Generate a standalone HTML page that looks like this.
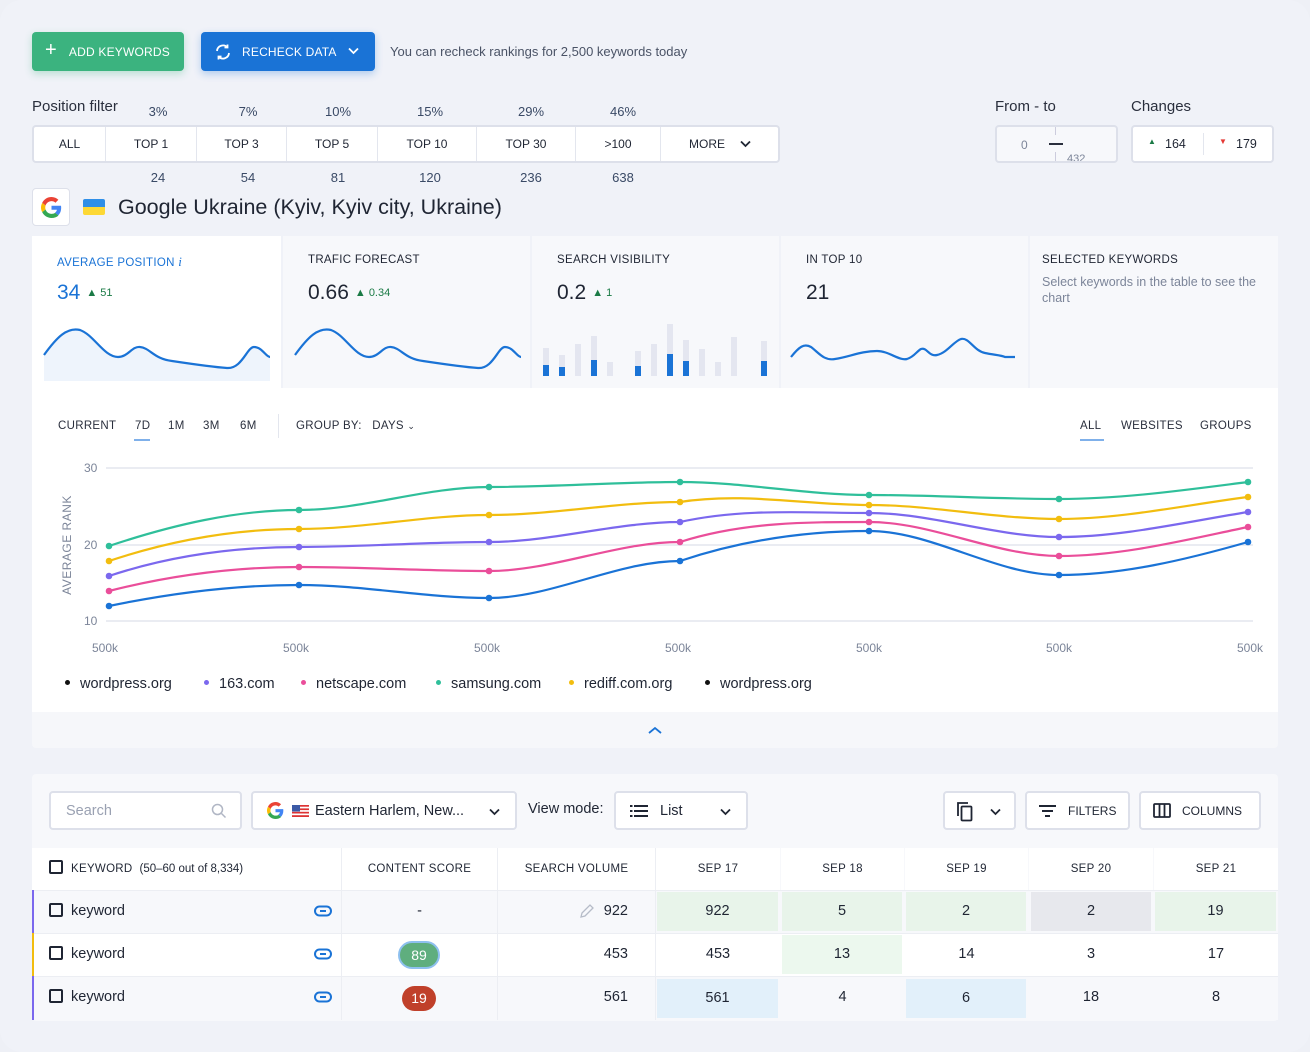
<!DOCTYPE html>
<html><head><meta charset="utf-8"><style>
*{box-sizing:border-box;margin:0;padding:0}
body{width:1310px;height:1052px;background:#eef0f6;font-family:"Liberation Sans",sans-serif;color:#1f2533;position:relative;overflow:hidden}
.a{position:absolute}
.btn{position:absolute;border-radius:4px;color:#fff;font-size:12px;display:flex;align-items:center;letter-spacing:.2px}
.lbl{font-size:15px;color:#2a2f3d}
.pf{position:absolute;top:125px;left:32px;width:748px;height:38px;background:#fff;border:2px solid #dde0ea;border-radius:4px}
.pf div{position:absolute;top:0;height:34px;line-height:34px;font-size:12px;text-align:center;border-right:1px solid #e3e6ee}
.num{position:absolute;font-size:13px;color:#3a4a66;width:60px;text-align:center}
.card{position:absolute;top:236px;height:152px;background:#f7f8fb}
.ct{position:absolute;left:25px;top:18px;font-size:11.5px;letter-spacing:.3px;color:#1f2533}
.cv{position:absolute;left:25px;top:45px;font-size:21px}
.up{font-size:11px;color:#1a7a45;margin-left:6px;vertical-align:3px}
.tb{position:absolute;top:420px;font-size:11.5px;letter-spacing:.3px;color:#2a2f3d}
.ax{position:absolute;font-size:12px;color:#7c8599}
.lg{position:absolute;top:676px;font-size:14.5px;color:#1f2533}
.lg i{display:inline-block;width:5px;height:5px;border-radius:50%;margin-right:10px;vertical-align:3px}
.box{position:absolute;background:#fff;border:2px solid #dde0ea;border-radius:4px;display:flex;align-items:center;font-size:14.5px}
.th{position:absolute;top:848px;height:42px;line-height:42px;font-size:11.5px;letter-spacing:.3px;text-align:center;background:#fff}
.cell{position:absolute;height:43px;line-height:43px;font-size:14.5px;text-align:center}
.cb{display:inline-block;width:14px;height:14px;border:2px solid #1f2533;border-radius:2px;vertical-align:-2px;margin-right:8px}
</style></head><body>
<div class="a" style="left:0;top:0;width:1310px;height:1052px;border-radius:22px;background:#f0f2f8"></div>

<div class="btn" style="left:32px;top:32px;width:152px;height:39px;background:#3bb37f;box-shadow:0 3px 8px rgba(59,179,127,.3)"><span style="font-size:20px;margin:0 12px 2px 13px;font-weight:300">+</span>ADD KEYWORDS</div>
<div class="btn" style="left:201px;top:32px;width:174px;height:39px;background:#1a73d6;box-shadow:0 3px 8px rgba(26,115,214,.3)">
<svg class="a" style="left:13px;top:11px" width="18" height="18" viewBox="0 0 18 18" fill="none" stroke="#fff" stroke-width="1.8"><path d="M3 8a6 6 0 0 1 10.5-3.5M15 10a6 6 0 0 1-10.5 3.5"/><path d="M13.5 1.5v3h-3M4.5 16.5v-3h3"/></svg>
<span style="margin-left:41px">RECHECK DATA</span>
<svg class="a" style="left:147px;top:15px" width="11" height="8" viewBox="0 0 11 8"><path d="M1 1.5l4.5 4.5 4.5-4.5" stroke="#fff" stroke-width="1.8" fill="none"/></svg></div>
<div class="a" style="left:390px;top:44px;font-size:13px;color:#4a5366">You can recheck rankings for 2,500 keywords today</div>

<div class="a lbl" style="left:32px;top:98px">Position filter</div>
<div class="num" style="left:128px;top:104px">3%</div><div class="num" style="left:218px;top:104px">7%</div><div class="num" style="left:308px;top:104px">10%</div><div class="num" style="left:400px;top:104px">15%</div><div class="num" style="left:501px;top:104px">29%</div><div class="num" style="left:593px;top:104px">46%</div>
<div class="pf">
<div style="left:0;width:72px;border-right:1px solid #e3e6ee">ALL</div>
<div style="left:72px;width:91px">TOP 1</div>
<div style="left:163px;width:90px">TOP 3</div>
<div style="left:253px;width:91px">TOP 5</div>
<div style="left:344px;width:99px">TOP 10</div>
<div style="left:443px;width:99px">TOP 30</div>
<div style="left:542px;width:85px">&gt;100</div>
<div style="left:627px;width:117px;border:none;text-align:left;padding-left:28px">MORE <svg style="margin-left:12px" width="11" height="8" viewBox="0 0 11 8"><path d="M1 1.5l4.5 4.5 4.5-4.5" stroke="#1f2533" stroke-width="1.8" fill="none"/></svg></div>
</div>
<div class="num" style="left:128px;top:170px">24</div><div class="num" style="left:218px;top:170px">54</div><div class="num" style="left:308px;top:170px">81</div><div class="num" style="left:400px;top:170px">120</div><div class="num" style="left:501px;top:170px">236</div><div class="num" style="left:593px;top:170px">638</div>

<div class="a lbl" style="left:995px;top:98px">From - to</div>
<div class="a" style="left:995px;top:125px;width:123px;height:38px;border:2px solid #dde0ea;border-radius:4px;background:#f7f8fb;overflow:hidden">
<div class="a" style="left:24px;top:11px;font-size:12px;color:#7c8599">0</div>
<div class="a" style="left:52px;top:16px;width:14px;height:2px;background:#2a2f3d"></div>
<div class="a" style="left:58px;top:0;width:1px;height:8px;background:#ccd"></div><div class="a" style="left:58px;top:25px;width:1px;height:10px;background:#ccd"></div>
<div class="a" style="left:70px;top:26px;font-size:11px;color:#7c8599">432</div></div>
<div class="a lbl" style="left:1131px;top:98px">Changes</div>
<div class="a" style="left:1131px;top:125px;width:143px;height:38px;border:2px solid #dde0ea;border-radius:4px;background:#fff;font-size:12.5px">
<span class="a" style="left:15px;top:10px;color:#1a7a45;font-size:8px">▲</span><span class="a" style="left:32px;top:10px">164</span>
<div class="a" style="left:70px;top:6px;width:1px;height:22px;background:#e3e6ee"></div>
<span class="a" style="left:86px;top:10px;color:#e53935;font-size:8px">▼</span><span class="a" style="left:103px;top:10px">179</span></div>

<div class="a" style="left:32px;top:188px;width:38px;height:38px;background:#fff;border:1px solid #dde0ea;border-radius:4px">
<svg class="a" style="left:8px;top:8px" width="21" height="21" viewBox="0 0 48 48"><path fill="#EA4335" d="M24 9.5c3.5 0 6.6 1.2 9 3.5l6.7-6.7C35.7 2.5 30.2 0 24 0 14.6 0 6.6 5.4 2.7 13.3l7.8 6C12.4 13.7 17.7 9.5 24 9.5z"/><path fill="#4285F4" d="M46.1 24.5c0-1.6-.1-3.1-.4-4.5H24v9h12.4c-.5 2.9-2.2 5.4-4.7 7l7.6 5.9c4.4-4.1 6.8-10.1 6.8-17.4z"/><path fill="#FBBC05" d="M10.5 28.7c-.5-1.4-.8-3-.8-4.7s.3-3.2.8-4.7l-7.8-6C1 16.6 0 20.2 0 24s1 7.4 2.7 10.7l7.8-6z"/><path fill="#34A853" d="M24 48c6.5 0 11.9-2.1 15.9-5.8l-7.6-5.9c-2.1 1.4-4.9 2.3-8.3 2.3-6.3 0-11.6-4.2-13.5-9.9l-7.8 6C6.6 42.6 14.6 48 24 48z"/></svg></div>
<div class="a" style="left:83px;top:199px;width:22px;height:16px;border-radius:2px;overflow:hidden"><div style="height:8px;background:#2f8fe8"></div><div style="height:8px;background:#fdd835"></div></div>
<div class="a" style="left:118px;top:195px;font-size:21.5px;color:#1f2533">Google Ukraine (Kyiv, Kyiv city, Ukraine)</div>

<!-- cards -->
<div class="card" style="left:32px;width:249px;background:#fff"><div class="ct" style="color:#1a73d6">AVERAGE POSITION <i style="font-family:'Liberation Serif';font-size:13px">i</i></div><div class="cv" style="color:#1a73d6">34<span class="up">▲ 51</span></div>
<svg class="a" style="left:10px;top:85px" width="235" height="60"><path d="M2 34 C15 16 25 6 38 9 C52 14 62 36 76 36 C86 36 90 25 98 26 C108 27 112 38 130 40 C150 43 170 46 185 47 C200 48 205 26 212 26 C220 26 224 36 228 36 L228 60 L2 60Z" fill="#eef4fc"/><path d="M2 34 C15 16 25 6 38 9 C52 14 62 36 76 36 C86 36 90 25 98 26 C108 27 112 38 130 40 C150 43 170 46 185 47 C200 48 205 26 212 26 C220 26 224 36 228 36" fill="none" stroke="#1a73d6" stroke-width="2.2"/></svg></div>
<div class="card" style="left:283px;width:247px"><div class="ct">TRAFIC FORECAST</div><div class="cv">0.66<span class="up">▲ 0.34</span></div>
<svg class="a" style="left:10px;top:85px" width="235" height="60"><path d="M2 34 C15 16 25 6 38 9 C52 14 62 36 76 36 C86 36 90 25 98 26 C108 27 112 38 130 40 C150 43 170 46 185 47 C200 48 205 26 212 26 C220 26 224 36 228 36" fill="none" stroke="#1a73d6" stroke-width="2.2"/></svg></div>
<div class="card" style="left:532px;width:247px"><div class="ct">SEARCH VISIBILITY</div><div class="cv">0.2<span class="up">▲ 1</span></div>
<svg class="a" style="left:0;top:80px" width="247" height="62">
<g fill="#e4e6f0"><rect x="11" y="32" width="6" height="28"/><rect x="27" y="39" width="6" height="21"/><rect x="43" y="28" width="6" height="32"/><rect x="59" y="20" width="6" height="40"/><rect x="75" y="46" width="6" height="14"/><rect x="103" y="35" width="6" height="25"/><rect x="119" y="28" width="6" height="32"/><rect x="135" y="8" width="6" height="52"/><rect x="151" y="24" width="6" height="36"/><rect x="167" y="33" width="6" height="27"/><rect x="183" y="46" width="6" height="14"/><rect x="199" y="21" width="6" height="39"/><rect x="229" y="25" width="6" height="35"/></g>
<g fill="#1a73d6"><rect x="11" y="49" width="6" height="11"/><rect x="27" y="51" width="6" height="9"/><rect x="59" y="44" width="6" height="16"/><rect x="103" y="50" width="6" height="10"/><rect x="135" y="38" width="6" height="22"/><rect x="151" y="45" width="6" height="15"/><rect x="229" y="45" width="6" height="15"/></g></svg></div>
<div class="card" style="left:781px;width:247px"><div class="ct">IN TOP 10</div><div class="cv">21</div>
<svg class="a" style="left:8px;top:85px" width="235" height="50"><path d="M2 36 C10 26 15 22 22 26 C30 32 35 40 46 38 C60 36 72 30 88 30 C100 30 110 40 118 38 C125 36 128 30 132 28 C138 26 140 36 148 34 C158 32 165 20 172 18 C180 16 185 30 196 32 C205 34 212 34 216 36 L226 36" fill="none" stroke="#1a73d6" stroke-width="2.2"/></svg></div>
<div class="card" style="left:1030px;width:248px"><div class="ct" style="left:12px">SELECTED KEYWORDS</div><div class="a" style="left:12px;top:38px;font-size:12.5px;color:#7c8599;line-height:16px;width:230px">Select keywords in the table to see the chart</div></div>

<!-- chart panel -->
<div class="a" style="left:32px;top:388px;width:1246px;height:324px;background:#fff"></div>
<div class="a" style="left:32px;top:712px;width:1246px;height:36px;background:#f6f7fa;border-radius:0 0 4px 4px"></div>
<svg class="a" style="left:648px;top:726px" width="14" height="9"><path d="M1 7l6-5 6 5" stroke="#1a73d6" stroke-width="1.8" fill="none"/></svg>
<div class="tb" style="left:58px">CURRENT</div><div class="tb" style="left:135px">7D</div><div class="tb" style="left:168px">1M</div><div class="tb" style="left:203px">3M</div><div class="tb" style="left:240px">6M</div>
<div class="a" style="left:134px;top:439px;width:16px;height:2px;background:#7fb0ea"></div>
<div class="a" style="left:278px;top:414px;width:1px;height:24px;background:#e3e6ee"></div>
<div class="tb" style="left:296px">GROUP BY:&nbsp;&nbsp; DAYS <span style="font-size:9px">⌄</span></div>
<div class="tb" style="left:1080px">ALL</div><div class="tb" style="left:1121px">WEBSITES</div><div class="tb" style="left:1200px">GROUPS</div>
<div class="a" style="left:1080px;top:439px;width:24px;height:2px;background:#7fb0ea"></div>

<div class="ax" style="left:84px;top:461px">30</div><div class="ax" style="left:84px;top:538px">20</div><div class="ax" style="left:84px;top:614px">10</div>
<div class="ax" style="left:17px;top:538px;transform:rotate(-90deg);transform-origin:center;width:100px;text-align:center;letter-spacing:.5px;white-space:nowrap">AVERAGE RANK</div>
<div class="ax" style="left:92px;top:641px">500k</div><div class="ax" style="left:283px;top:641px">500k</div><div class="ax" style="left:474px;top:641px">500k</div><div class="ax" style="left:665px;top:641px">500k</div><div class="ax" style="left:856px;top:641px">500k</div><div class="ax" style="left:1046px;top:641px">500k</div><div class="ax" style="left:1237px;top:641px">500k</div>
<svg class="a" style="left:0;top:0" width="1310" height="700">
<g stroke="#e3e5ee" stroke-width="1.5"><line x1="106" y1="468" x2="1253" y2="468"/><line x1="106" y1="545" x2="1253" y2="545"/><line x1="106" y1="621" x2="1253" y2="621"/></g>
<g fill="none" stroke-width="2.2">
<path stroke="#2fbf9a" d="M109 546 C172 525 236 510 299 510 C362 510 426 487 489 487 C552 487 617 482 680 482 C743 482 806 495 869 495 C932 495 996 499 1059 499 C1122 499 1185 490 1248 482"/>
<path stroke="#f2bd0f" d="M109 561 C172 540 236 529 299 529 C362 529 426 515 489 515 C552 515 617 502 680 502 C743 492 806 505 869 505 C932 505 996 519 1059 519 C1122 519 1185 505 1248 497"/>
<path stroke="#7b68ee" d="M109 576 C172 555 236 547 299 547 C362 547 426 542 489 542 C552 542 617 522 680 522 C743 508 806 513 869 513 C932 513 996 537 1059 537 C1122 537 1185 522 1248 512"/>
<path stroke="#ea4e9a" d="M109 591 C172 575 236 567 299 567 C362 567 426 571 489 571 C552 571 617 542 680 542 C743 522 806 522 869 522 C932 522 996 556 1059 556 C1122 556 1185 540 1248 527"/>
<path stroke="#1a73d6" d="M109 606 C172 593 236 585 299 585 C362 585 426 598 489 598 C552 598 617 561 680 561 C743 540 806 531 869 531 C932 531 996 575 1059 575 C1122 575 1185 560 1248 542"/>
</g>
<g fill="#2fbf9a"><circle cx="109" cy="546" r="3.3"/><circle cx="299" cy="510" r="3.3"/><circle cx="489" cy="487" r="3.3"/><circle cx="680" cy="482" r="3.3"/><circle cx="869" cy="495" r="3.3"/><circle cx="1059" cy="499" r="3.3"/><circle cx="1248" cy="482" r="3.3"/></g>
<g fill="#f2bd0f"><circle cx="109" cy="561" r="3.3"/><circle cx="299" cy="529" r="3.3"/><circle cx="489" cy="515" r="3.3"/><circle cx="680" cy="502" r="3.3"/><circle cx="869" cy="505" r="3.3"/><circle cx="1059" cy="519" r="3.3"/><circle cx="1248" cy="497" r="3.3"/></g>
<g fill="#7b68ee"><circle cx="109" cy="576" r="3.3"/><circle cx="299" cy="547" r="3.3"/><circle cx="489" cy="542" r="3.3"/><circle cx="680" cy="522" r="3.3"/><circle cx="869" cy="513" r="3.3"/><circle cx="1059" cy="537" r="3.3"/><circle cx="1248" cy="512" r="3.3"/></g>
<g fill="#ea4e9a"><circle cx="109" cy="591" r="3.3"/><circle cx="299" cy="567" r="3.3"/><circle cx="489" cy="571" r="3.3"/><circle cx="680" cy="542" r="3.3"/><circle cx="869" cy="522" r="3.3"/><circle cx="1059" cy="556" r="3.3"/><circle cx="1248" cy="527" r="3.3"/></g>
<g fill="#1a73d6"><circle cx="109" cy="606" r="3.3"/><circle cx="299" cy="585" r="3.3"/><circle cx="489" cy="598" r="3.3"/><circle cx="680" cy="561" r="3.3"/><circle cx="869" cy="531" r="3.3"/><circle cx="1059" cy="575" r="3.3"/><circle cx="1248" cy="542" r="3.3"/></g>
</svg>
<div class="lg" style="left:65px"><i style="background:#111"></i>wordpress.org</div>
<div class="lg" style="left:204px"><i style="background:#7b68ee"></i>163.com</div>
<div class="lg" style="left:301px"><i style="background:#ea4e9a"></i>netscape.com</div>
<div class="lg" style="left:436px"><i style="background:#2fbf9a"></i>samsung.com</div>
<div class="lg" style="left:569px"><i style="background:#f2bd0f"></i>rediff.com.org</div>
<div class="lg" style="left:705px"><i style="background:#111"></i>wordpress.org</div>

<!-- table -->
<div class="a" style="left:32px;top:774px;width:1246px;height:247px;background:#f7f8fb;border-radius:4px"></div>
<div class="box" style="left:49px;top:791px;width:193px;height:39px;color:#9aa1b2;padding-left:15px">Search<svg class="a" style="left:160px;top:10px" width="16" height="16" viewBox="0 0 16 16" fill="none" stroke="#b0b6c4" stroke-width="1.5"><circle cx="6.5" cy="6.5" r="5"/><path d="M10.5 10.5l4 4"/></svg></div>
<div class="box" style="left:251px;top:791px;width:266px;height:39px;padding-left:14px">
<svg width="17" height="17" viewBox="0 0 48 48"><path fill="#EA4335" d="M24 9.5c3.5 0 6.6 1.2 9 3.5l6.7-6.7C35.7 2.5 30.2 0 24 0 14.6 0 6.6 5.4 2.7 13.3l7.8 6C12.4 13.7 17.7 9.5 24 9.5z"/><path fill="#4285F4" d="M46.1 24.5c0-1.6-.1-3.1-.4-4.5H24v9h12.4c-.5 2.9-2.2 5.4-4.7 7l7.6 5.9c4.4-4.1 6.8-10.1 6.8-17.4z"/><path fill="#FBBC05" d="M10.5 28.7c-.5-1.4-.8-3-.8-4.7s.3-3.2.8-4.7l-7.8-6C1 16.6 0 20.2 0 24s1 7.4 2.7 10.7l7.8-6z"/><path fill="#34A853" d="M24 48c6.5 0 11.9-2.1 15.9-5.8l-7.6-5.9c-2.1 1.4-4.9 2.3-8.3 2.3-6.3 0-11.6-4.2-13.5-9.9l-7.8 6C6.6 42.6 14.6 48 24 48z"/></svg>
<svg style="margin:0 6px 0 8px" width="17" height="12" viewBox="0 0 17 12"><rect width="17" height="12" fill="#fff"/><g fill="#d33"><rect y="0" width="17" height="1.7"/><rect y="3.4" width="17" height="1.7"/><rect y="6.8" width="17" height="1.7"/><rect y="10.2" width="17" height="1.8"/></g><rect width="8" height="6.5" fill="#3c5aa6"/></svg>
Eastern Harlem, New...<svg class="a" style="left:236px;top:15px" width="11" height="8" viewBox="0 0 11 8"><path d="M1 1.5l4.5 4.5 4.5-4.5" stroke="#1f2533" stroke-width="1.8" fill="none"/></svg></div>
<div class="a" style="left:528px;top:801px;font-size:14.5px">View mode:</div>
<div class="box" style="left:614px;top:791px;width:134px;height:39px;padding-left:14px">
<svg width="18" height="12" viewBox="0 0 18 12" fill="#1f2533"><rect x="0" y="0" width="2.5" height="2"/><rect x="4" y="0" width="14" height="2"/><rect x="0" y="5" width="2.5" height="2"/><rect x="4" y="5" width="14" height="2"/><rect x="0" y="10" width="2.5" height="2"/><rect x="4" y="10" width="14" height="2"/></svg><span style="margin-left:12px">List</span>
<svg class="a" style="left:104px;top:15px" width="11" height="8" viewBox="0 0 11 8"><path d="M1 1.5l4.5 4.5 4.5-4.5" stroke="#1f2533" stroke-width="1.8" fill="none"/></svg></div>
<div class="box" style="left:943px;top:791px;width:73px;height:39px">
<svg class="a" style="left:11px;top:8px" width="18" height="21" viewBox="0 0 18 21" fill="none" stroke="#1f2533" stroke-width="1.8"><path d="M2 15V2h10"/><rect x="5.5" y="5.5" width="10" height="14" rx="1"/></svg>
<svg class="a" style="left:45px;top:15px" width="11" height="8" viewBox="0 0 11 8"><path d="M1 1.5l4.5 4.5 4.5-4.5" stroke="#1f2533" stroke-width="1.8" fill="none"/></svg></div>
<div class="box" style="left:1025px;top:791px;width:105px;height:39px;font-size:12px;padding-left:12px">
<svg width="17" height="12" viewBox="0 0 17 12" fill="#1f2533"><rect x="0" y="0" width="17" height="2"/><rect x="3" y="5" width="11" height="2"/><rect x="6" y="10" width="5" height="2"/></svg><span style="margin-left:12px">FILTERS</span></div>
<div class="box" style="left:1139px;top:791px;width:122px;height:39px;font-size:12px;padding-left:12px">
<svg width="18" height="15" viewBox="0 0 18 15" fill="none" stroke="#1f2533" stroke-width="1.8"><rect x="1" y="1" width="16" height="13" rx="1"/><path d="M6.5 1v13M11.5 1v13"/></svg><span style="margin-left:11px">COLUMNS</span></div>

<div class="th" style="left:32px;width:309px;text-align:left;padding-left:17px"><span class="cb"></span>KEYWORD&nbsp; <span style="letter-spacing:0">(50–60 out of 8,334)</span></div>
<div class="th" style="left:342px;width:155px">CONTENT SCORE</div>
<div class="th" style="left:498px;width:157px">SEARCH VOLUME</div>
<div class="th" style="left:656px;width:124px">SEP 17</div>
<div class="th" style="left:781px;width:123px">SEP 18</div>
<div class="th" style="left:905px;width:123px">SEP 19</div>
<div class="th" style="left:1029px;width:124px">SEP 20</div>
<div class="th" style="left:1154px;width:124px">SEP 21</div>

<!-- rows -->
<div class="a" style="left:32px;top:890px;width:1246px;height:43px;background:#f7f8fb;border-top:1px solid #eceef3"></div>
<div class="a" style="left:32px;top:933px;width:1246px;height:43px;background:#fff;border-top:1px solid #eceef3"></div>
<div class="a" style="left:32px;top:976px;width:1246px;height:44px;background:#f7f8fb;border-top:1px solid #eceef3"></div>
<div class="a" style="left:32px;top:890px;width:2px;height:43px;background:#7b68ee"></div>
<div class="a" style="left:32px;top:933px;width:2px;height:43px;background:#f2bd0f"></div>
<div class="a" style="left:32px;top:976px;width:2px;height:44px;background:#7b68ee"></div>
<div class="a" style="left:341px;top:848px;width:1px;height:172px;background:#eceef3"></div>
<div class="a" style="left:497px;top:848px;width:1px;height:172px;background:#eceef3"></div>
<div class="a" style="left:655px;top:848px;width:1px;height:172px;background:#eceef3"></div>

<div class="cell" style="left:49px;top:890px;text-align:left"><span class="cb"></span>keyword</div>
<div class="cell" style="left:49px;top:933px;text-align:left"><span class="cb"></span>keyword</div>
<div class="cell" style="left:49px;top:976px;text-align:left"><span class="cb"></span>keyword</div>
<svg class="a" style="left:314px;top:905px" width="18" height="12" viewBox="0 0 18 12" fill="none" stroke="#1a73d6" stroke-width="2"><rect x="1" y="1.5" width="16" height="9" rx="4.5"/><path d="M6 6h6"/></svg>
<svg class="a" style="left:314px;top:948px" width="18" height="12" viewBox="0 0 18 12" fill="none" stroke="#1a73d6" stroke-width="2"><rect x="1" y="1.5" width="16" height="9" rx="4.5"/><path d="M6 6h6"/></svg>
<svg class="a" style="left:314px;top:991px" width="18" height="12" viewBox="0 0 18 12" fill="none" stroke="#1a73d6" stroke-width="2"><rect x="1" y="1.5" width="16" height="9" rx="4.5"/><path d="M6 6h6"/></svg>

<div class="cell" style="left:342px;top:890px;width:155px">-</div>
<div class="a" style="left:398px;top:941px;width:42px;height:28px;border-radius:14px;background:#5fae7e;border:2px solid #8ec0ef;color:#fff;font-size:14px;text-align:center;line-height:24px">89</div>
<div class="a" style="left:402px;top:986px;width:34px;height:25px;border-radius:13px;background:#c0402a;color:#fff;font-size:14px;text-align:center;line-height:25px">19</div>

<svg class="a" style="left:579px;top:903px" width="16" height="16" viewBox="0 0 16 16" fill="none" stroke="#b6bcc8" stroke-width="1.3"><path d="M2 14l1-4 8-8 3 3-8 8z"/></svg>
<div class="cell" style="left:498px;top:890px;width:130px;text-align:right">922</div>
<div class="cell" style="left:498px;top:933px;width:130px;text-align:right">453</div>
<div class="cell" style="left:498px;top:976px;width:130px;text-align:right">561</div>

<div class="cell" style="left:657px;top:892px;width:121px;height:39px;line-height:39px;background:#e8f4ea">922</div>
<div class="cell" style="left:782px;top:892px;width:120px;height:39px;line-height:39px;background:#e8f4ea">5</div>
<div class="cell" style="left:906px;top:892px;width:120px;height:39px;line-height:39px;background:#e8f4ea">2</div>
<div class="cell" style="left:1031px;top:892px;width:120px;height:39px;line-height:39px;background:#e7e8ed">2</div>
<div class="cell" style="left:1155px;top:892px;width:121px;height:39px;line-height:39px;background:#e8f4ea">19</div>

<div class="cell" style="left:656px;top:933px;width:124px">453</div>
<div class="cell" style="left:782px;top:935px;width:120px;height:39px;line-height:39px;background:#ecf8ee">13</div>
<div class="cell" style="left:905px;top:933px;width:123px">14</div>
<div class="cell" style="left:1029px;top:933px;width:124px">3</div>
<div class="cell" style="left:1154px;top:933px;width:124px">17</div>

<div class="cell" style="left:657px;top:979px;width:121px;height:39px;line-height:39px;background:#e2f0fa">561</div>
<div class="cell" style="left:781px;top:976px;width:123px">4</div>
<div class="cell" style="left:906px;top:979px;width:120px;height:39px;line-height:39px;background:#e2f0fa">6</div>
<div class="cell" style="left:1029px;top:976px;width:124px">18</div>
<div class="cell" style="left:1154px;top:976px;width:124px">8</div>
</body></html>
